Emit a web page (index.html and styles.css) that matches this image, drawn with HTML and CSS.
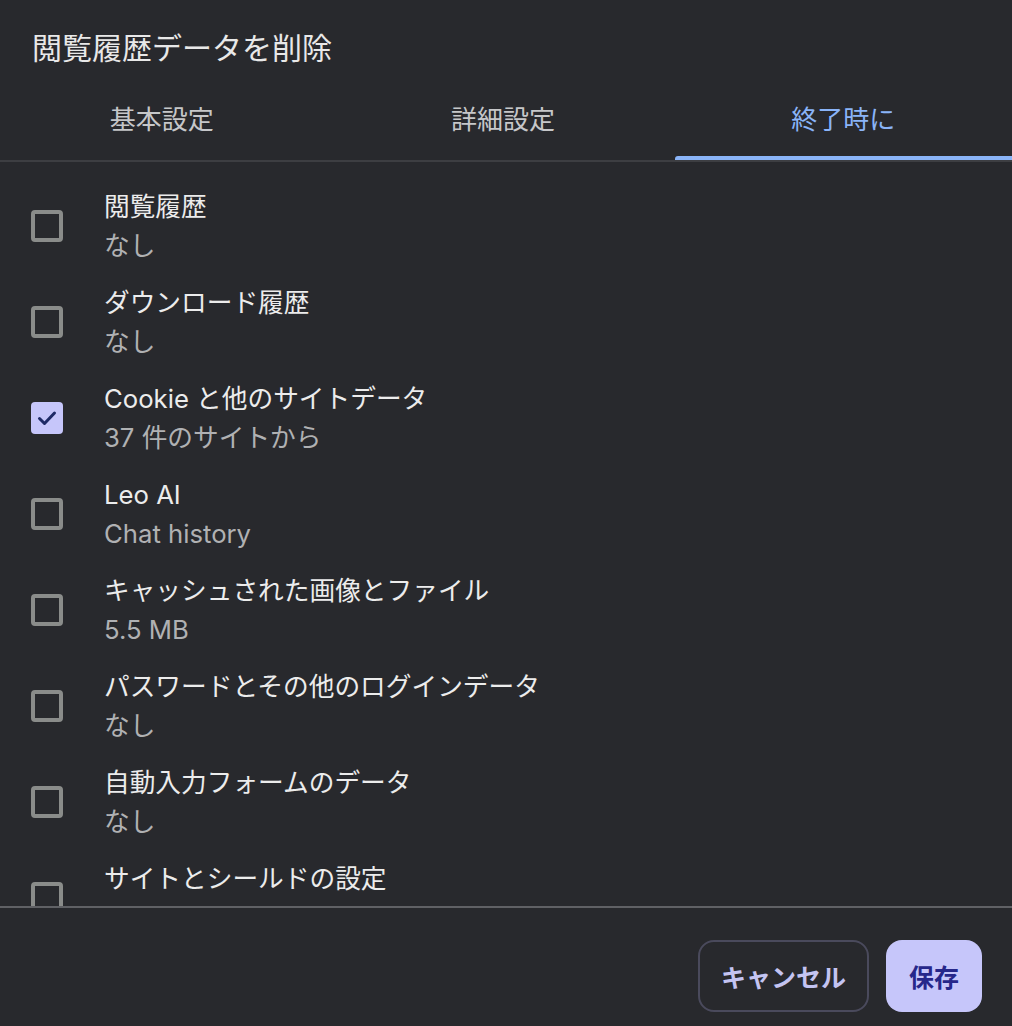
FILE: index.html
```html
<!DOCTYPE html>
<html lang="ja">
<head>
<meta charset="utf-8">
<title>閲覧履歴データを削除</title>
<link rel="stylesheet" href="styles.css">
</head>
<body>
<div class="dialog">
  <h1 class="title">閲覧履歴データを削除</h1>
  <div class="tabs">
    <div class="tab">基本設定</div>
    <div class="tab">詳細設定</div>
    <div class="tab active">終了時に</div>
  </div>
  <div class="list">
    <div class="row">
      <span class="box"></span>
      <div class="text"><div class="label">閲覧履歴</div><div class="sub">なし</div></div>
    </div>
    <div class="row">
      <span class="box"></span>
      <div class="text"><div class="label">ダウンロード履歴</div><div class="sub">なし</div></div>
    </div>
    <div class="row">
      <span class="box checked"><svg viewBox="0 0 32 32" width="32" height="32"><path d="M8.5 16.5 L13.5 21.5 L23.5 11" fill="none" stroke="#1e2a66" stroke-width="3" stroke-linecap="round" stroke-linejoin="round"/></svg></span>
      <div class="text"><div class="label">Cookie と他のサイトデータ</div><div class="sub">37 件のサイトから</div></div>
    </div>
    <div class="row">
      <span class="box"></span>
      <div class="text"><div class="label">Leo AI</div><div class="sub">Chat history</div></div>
    </div>
    <div class="row">
      <span class="box"></span>
      <div class="text"><div class="label">キャッシュされた画像とファイル</div><div class="sub">5.5 MB</div></div>
    </div>
    <div class="row">
      <span class="box"></span>
      <div class="text"><div class="label">パスワードとその他のログインデータ</div><div class="sub">なし</div></div>
    </div>
    <div class="row">
      <span class="box"></span>
      <div class="text"><div class="label">自動入力フォームのデータ</div><div class="sub">なし</div></div>
    </div>
    <div class="row">
      <span class="box"></span>
      <div class="text"><div class="label">サイトとシールドの設定</div></div>
    </div>
  </div>
  <div class="footer">
    <button class="btn cancel">キャンセル</button>
    <button class="btn save">保存</button>
  </div>
</div>
</body>
</html>
```

FILE: styles.css
```css
html, body {
  margin: 0;
  padding: 0;
  background: #28292d;
}
body {
  font-family: Inter, "Noto Sans CJK JP", sans-serif;
  color: #e6e6e6;
  width: 1012px;
  height: 1026px;
  overflow: hidden;
}
.dialog {
  display: flex;
  flex-direction: column;
  height: 1026px;
}
.title {
  margin: 0;
  padding: 26px 32px 0;
  font-size: 30px;
  font-weight: 400;
  line-height: 44px;
  height: 44px;
  color: #e8e8e8;
}
.tabs {
  display: grid;
  grid-template-columns: 1fr 1fr 1fr;
  border-bottom: 2px solid #3d3e42;
}
.tab {
  position: relative;
  text-align: center;
  font-size: 26px;
  line-height: 40px;
  padding: 30px 0 20px;
  color: #c6c7c9;
}
.tab:first-child { padding-right: 14px; }
.tab:nth-child(2) { padding-right: 6px; }
.tab.active {
  color: #8ab4f8;
}
.tab.active::after {
  content: "";
  position: absolute;
  left: 0;
  right: 0;
  bottom: 0;
  height: 4px;
  background: #8ab4f8;
  border-radius: 3px 0 0 0;
}
.list {
  height: 728px;
  overflow: hidden;
  padding-top: 16px;
  border-bottom: 2px solid #606165;
}
.row {
  display: flex;
  align-items: center;
  gap: 40px;
  padding: 10px 32px;
  height: 76px;
}
.box {
  box-sizing: border-box;
  flex: none;
  width: 32px;
  height: 32px;
  border: 4px solid #8a8c8a;
  border-radius: 4px;
  position: relative;
  margin-left: -1px;
}
.box.checked {
  border: none;
  background: #c6c6fa;
}
.box svg { display: block; }
.text {
  font-size: 25.7px;
  line-height: 38px;
  margin-left: 1px;
}
.row:last-child .text {
  align-self: flex-start;
}
.label { color: #ececec; }
.sub { color: #b0b1b3; padding-top: 1px; }
.footer {
  display: flex;
  justify-content: flex-end;
  gap: 17px;
  padding: 32px 30px 0 0;
}
.btn {
  font-family: Inter, "Noto Sans CJK JP", sans-serif;
  font-size: 25px;
  font-weight: 700;
  height: 72px;
  border-radius: 16px;
  cursor: pointer;
}
.cancel {
  width: 171px;
  background: transparent;
  border: 2px solid #4a4a5c;
  color: #c4c4f2;
}
.save {
  width: 96px;
  background: #c6c6fa;
  border: none;
  color: #26278a;
}
```
